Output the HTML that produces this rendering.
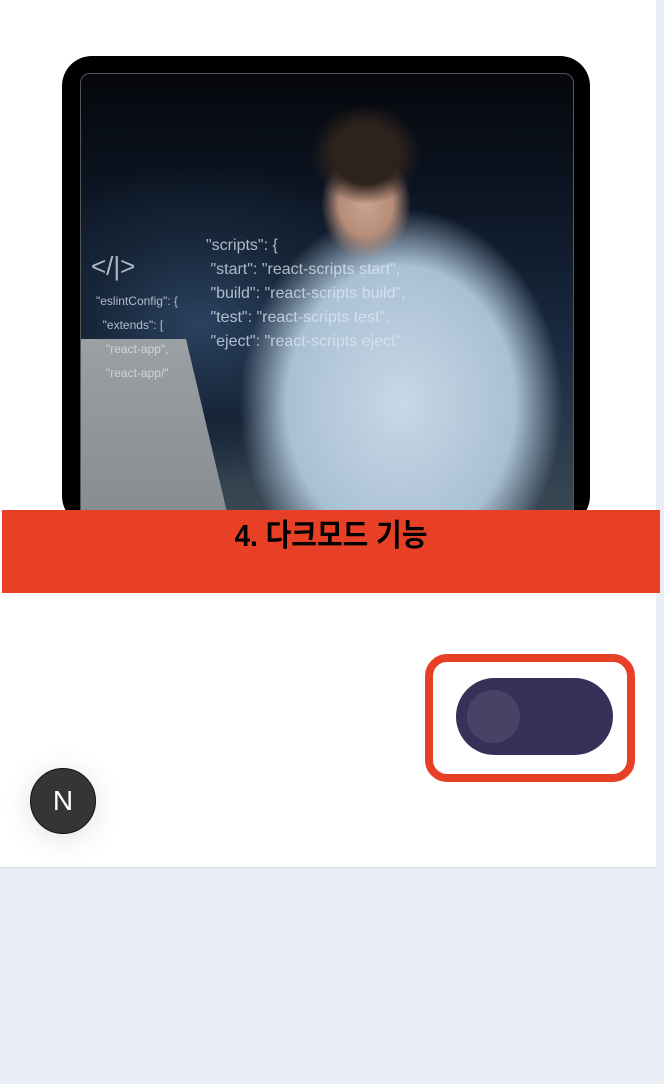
<!DOCTYPE html>
<html><head><meta charset="utf-8"><style>
body{margin:0;width:664px;height:1084px;background:#e9edf6;position:relative;overflow:hidden;font-family:"Liberation Sans","Noto Sans CJK KR",sans-serif}
.page{position:absolute;left:0;top:0;width:656px;height:867px;background:#fff;border-bottom:1px solid #d8dbe0}
.frame{position:absolute;left:62px;top:56px;width:528px;height:470px;background:#000;border-radius:30px}
.img{position:absolute;left:80px;top:73px;width:492px;height:450px;border-radius:10px;border:1px solid #555;overflow:hidden;
background:
radial-gradient(ellipse 55px 50px at 285px 80px,#2e221c 0,#2e221c 60%,transparent 100%),
radial-gradient(ellipse 45px 55px at 285px 130px,#c9a48e 0,#b58c78 60%,transparent 100%),
radial-gradient(ellipse 190px 230px at 320px 330px,#c8d8e6 0,#a9c0d4 60%,transparent 85%),
radial-gradient(ellipse 200px 160px at 120px 250px,#2a4260 0,#162436 60%,transparent 100%),
linear-gradient(180deg,#05070b 0,#0d1726 30%,#1a2a40 60%,#3c4a55 100%);}
.lap{position:absolute;left:0;top:265px;width:150px;height:190px;background:linear-gradient(180deg,#9aa0a3,#858b8e);clip-path:polygon(0 0,70% 0,100% 100%,0 100%)}
.code{position:absolute;color:#dfe8f5;font-size:16px;opacity:.75;line-height:24px;font-family:"Liberation Sans",sans-serif}
.band{position:absolute;left:2px;top:510px;width:658px;height:83px;background:#e84026;text-align:center}
.band span{display:block;margin-top:0px;font-size:31px;font-weight:bold;color:#000;transform:scaleX(.9)}
.tbox{position:absolute;left:425px;top:654px;width:194px;height:112px;border:8px solid #e84026;border-radius:22px;background:#fff}
.tog{position:absolute;left:456px;top:678px;width:157px;height:77px;border-radius:39px;background:#383058}
.knob{position:absolute;left:467px;top:690px;width:53px;height:53px;border-radius:50%;background:#4a4266}
.nbtn{position:absolute;left:30px;top:768px;width:64px;height:64px;border-radius:50%;background:#353535;border:1px solid #111;box-shadow:0 4px 30px rgba(0,0,0,.12);color:#fff;font-size:28px;text-align:center;line-height:64px}
</style></head><body>
<div class="page"></div>
<div class="frame"></div>
<div class="img">
<div class="lap"></div>
<div class="code" style="left:125px;top:160px">"scripts": {<br>&nbsp;"start": "react-scripts start",<br>&nbsp;"build": "react-scripts build",<br>&nbsp;"test": "react-scripts test",<br>&nbsp;"eject": "react-scripts eject"</div>
<div class="code" style="left:10px;top:180px;font-size:26px">&lt;/|&gt;</div>
<div class="code" style="left:15px;top:215px;font-size:12px">"eslintConfig": {<br>&nbsp;&nbsp;"extends": [<br>&nbsp;&nbsp;&nbsp;"react-app",<br>&nbsp;&nbsp;&nbsp;"react-app/"</div>
</div>
<div class="band"><span>4. 다크모드 기능</span></div>
<div class="tbox"></div>
<div class="tog"></div>
<div class="knob"></div>
<div class="nbtn">N</div>
</body></html>
